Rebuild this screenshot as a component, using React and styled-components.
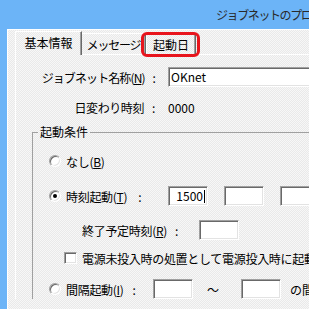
import React from 'react';
import styled, { createGlobalStyle, css } from 'styled-components';

const Global = createGlobalStyle`
  html, body { margin: 0; padding: 0; overflow: hidden; background: #6cb4f7; }
  body {
    font-family: "Noto Sans CJK JP", "Noto Sans", sans-serif;
    font-size: 12px;
    color: #000;
  }
  u { text-underline-offset: 1px; }
`;

const checker = css`
  background-color: #f0f0f0;
  background-image: conic-gradient(#e9e9e9 0 25%, #f7f7f7 0 50%, #e9e9e9 0 75%, #f7f7f7 0);
  background-size: 2px 2px;
`;

const sunken = css`
  box-sizing: border-box;
  background: #fff;
  border: 1px solid;
  border-color: #a0a0a0 #fff #fff #a0a0a0;
  box-shadow: inset 1px 1px 0 #696969, inset -1px -1px 0 #e3e3e3;
`;

const Window = styled.div`
  width: 600px;
  height: 100vh;
  display: flex;
  flex-direction: column;
  background: #6cb4f7;
`;

const TitleBar = styled.div`
  height: 29px;
  flex: none;
  display: flex;
  align-items: center;
  padding-left: 216px;
  font-size: 12px;
  letter-spacing: -1.4px;
  color: #2a2a2a;
  white-space: nowrap;
`;

const Client = styled.div`
  flex: 1;
  margin-left: 7px;
  border-top: 1px solid #fff;
  border-left: 1px solid #fff;
  padding: 1px 0 0 7px;
  ${checker}
`;

const TabStrip = styled.div`
  display: flex;
  align-items: flex-end;
  height: 23px;
`;

const Tab = styled.div`
  position: relative;
  box-sizing: border-box;
  flex: none;
  width: ${p => p.$w}px;
  height: ${p => (p.$active ? 24 : 21)}px;
  margin-bottom: ${p => (p.$active ? -1 : 0)}px;
  padding-top: ${p => (p.$active ? 0 : 1)}px;
  padding-bottom: ${p => (p.$active ? 2 : 0)}px;
  display: flex;
  align-items: center;
  justify-content: center;
  border-top: 1px solid #fff;
  border-left: ${p => (p.$noLeft ? 'none' : '1px solid #fff')};
  border-right: 1px solid #696969;
  box-shadow: inset -1px 0 0 #a0a0a0;
  letter-spacing: ${p => p.$ls || 0}px;
  white-space: nowrap;
  z-index: ${p => (p.$active ? 1 : 0)};
  ${checker}
`;

const Highlight = styled.span`
  position: absolute;
  left: -6px;
  top: -2px;
  right: -5px;
  bottom: -3px;
  border: 3px solid #e8141c;
  border-radius: 6px;
  pointer-events: none;
`;

const Panel = styled.div`
  border-top: 1px solid #fff;
  border-left: 1px solid #fff;
  padding-top: 12px;
`;

const FormGrid = styled.div`
  display: grid;
  grid-template-columns: 139px 1fr;
  grid-auto-rows: 20px;
  column-gap: 13px;
  row-gap: 10px;
  align-items: center;
`;

const Label = styled.div`
  text-align: right;
  white-space: nowrap;
  letter-spacing: ${p => p.$ls ?? -0.4}px;
`;

const Colon = styled.span`
  margin-left: ${p => p.$gap}px;
`;

const TextBox = styled.div`
  ${sunken}
  flex: none;
  width: ${p => p.$w}px;
  height: 20px;
  margin-left: ${p => p.$ml || 0}px;
  padding: 0 2px 0 2px;
  display: flex;
  align-items: center;
  justify-content: ${p => (p.$right ? 'flex-end' : 'flex-start')};
  white-space: nowrap;
  line-height: 1;
`;

const Caret = styled.span`
  display: inline-block;
  width: 1px;
  height: 13px;
  margin-left: 1px;
  background: #000;
`;

const Value = styled.div`
  white-space: nowrap;
`;

const Group = styled.fieldset`
  margin: 8px 0 0 16px;
  padding: 0;
  min-width: 0;
  border: none;
  border-top: 1px solid #a0a0a0;
  border-left: 1px solid #a0a0a0;
`;

const Legend = styled.legend`
  margin-left: 5px;
  padding: 0 2px;
  line-height: 14px;
`;

const GroupBody = styled.div`
  display: flex;
  flex-direction: column;
  padding-left: 16px;
`;

const Row = styled.div`
  display: flex;
  align-items: center;
  height: ${p => p.$h}px;
  margin-top: ${p => p.$top}px;
  padding-left: ${p => p.$indent || 0}px;
  white-space: nowrap;
`;

const Radio = styled.span`
  ${sunken}
  position: relative;
  flex: none;
  width: 12px;
  height: 12px;
  border-radius: 50%;
  margin-right: 5px;
  &::after {
    content: '';
    display: ${p => (p.$checked ? 'block' : 'none')};
    position: absolute;
    left: 3px;
    top: 3px;
    width: 4px;
    height: 4px;
    border-radius: 50%;
    background: #000;
  }
`;

const Check = styled.span`
  ${sunken}
  flex: none;
  width: 13px;
  height: 12px;
  margin-right: 5px;
`;

const RowLabel = styled.span`
  flex: none;
  width: ${p => (p.$w ? `${p.$w}px` : 'auto')};
  letter-spacing: -0.3px;
`;

const Sep = styled.span`
  flex: none;
  margin: 0 ${p => p.$mr}px 0 ${p => p.$ml}px;
`;

export default function App() {
  return (
    <>
      <Global />
      <Window>
        <TitleBar>ジョブネットのプロパティ</TitleBar>
        <Client>
          <TabStrip>
            <Tab $w={67} $active>基本情報</Tab>
            <Tab $w={64} $noLeft $ls={-1.2}>メッセージ</Tab>
            <Tab $w={50}>
              起動日
              <Highlight />
            </Tab>
          </TabStrip>
          <Panel>
            <FormGrid>
              <Label $ls={-0.9}>
                ジョブネット名称(<u>N</u>)<Colon $gap={8}>:</Colon>
              </Label>
              <TextBox $w={200}>OKnet</TextBox>
              <Label>
                日変わり時刻<Colon $gap={8}>:</Colon>
              </Label>
              <Value>0000</Value>
            </FormGrid>
            <Group>
              <Legend>起動条件</Legend>
              <GroupBody>
                <Row $top={15} $h={14}>
                  <Radio />
                  <RowLabel>なし(<u>B</u>)</RowLabel>
                </Row>
                <Row $top={18} $h={20}>
                  <Radio $checked />
                  <RowLabel $w={102}>
                    時刻起動(<u>T</u>)<Colon $gap={11}>:</Colon>
                  </RowLabel>
                  <TextBox $w={40} $right>
                    1500
                    <Caret />
                  </TextBox>
                  <TextBox $w={40} $ml={16} />
                  <TextBox $w={40} $ml={16} />
                </Row>
                <Row $top={14} $h={20} $indent={33}>
                  <RowLabel $w={117}>
                    終了予定時刻(<u>R</u>)<Colon $gap={8}>:</Colon>
                  </RowLabel>
                  <TextBox $w={40} />
                </Row>
                <Row $top={12} $h={12} $indent={15}>
                  <Check />
                  <RowLabel>電源未投入時の処置として電源投入時に起動する</RowLabel>
                </Row>
                <Row $top={15} $h={20}>
                  <Radio />
                  <RowLabel $w={87}>
                    間隔起動(<u>I</u>)<Colon $gap={9}>:</Colon>
                  </RowLabel>
                  <TextBox $w={40} />
                  <Sep $ml={14} $mr={22}>～</Sep>
                  <TextBox $w={40} />
                  <Sep $ml={9} $mr={0}>の間隔</Sep>
                </Row>
              </GroupBody>
            </Group>
          </Panel>
        </Client>
      </Window>
    </>
  );
}
